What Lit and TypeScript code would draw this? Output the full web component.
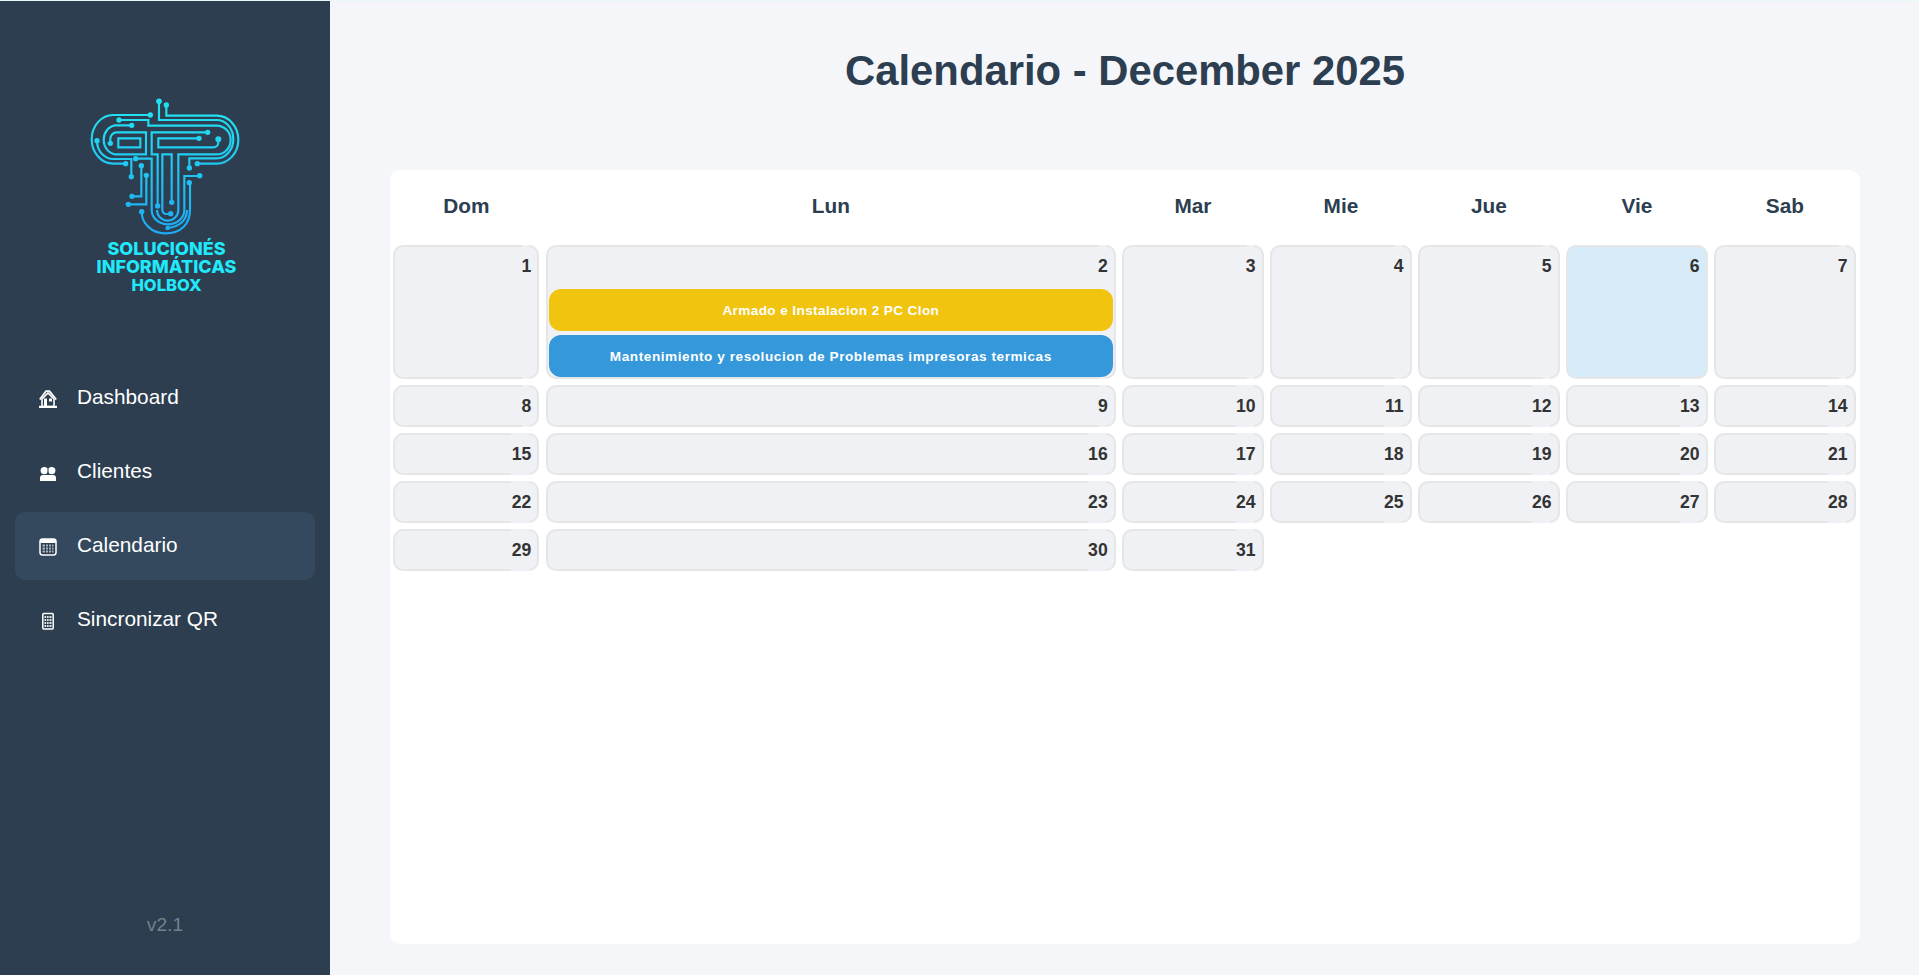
import { LitElement, html, css, svg } from "lit";
import { customElement } from "lit/decorators.js";

const days = ["Dom", "Lun", "Mar", "Mie", "Jue", "Vie", "Sab"];
const nums = Array.from({ length: 31 }, (_, i) => i + 1);

const logoLines = [
  "M244 30V62H395A65 72 0 0 1 395 206H337",
  "M222 19V75H395A50 57.5 0 0 1 395 190H313V219",
  "M102 75H190V92H395A42 43 0 0 1 395 178H280V345A32 32 0 0 1 216 345",
  "M368 112H200V178H218V333",
  "M342 130H220V157H385A15 15 0 0 0 400 142V133",
  "M100 130H166V157H100Z",
  "M196 60H85A65 73 0 0 0 85 206H122",
  "M140 91H90A40 44 0 0 0 90 178H183V112H95A19 19 0 0 0 76 131V145",
  "M36 137C36 170 60 192 85 192H139V245",
  "M169 212V304H141",
  "M184 241V328H130",
  "M152 191H200V345A49 43 0 0 0 298 345V243H344",
  "M170 350C170 385 200 415 240 415C290 415 315 385 315 345V263",
  "M248 399C285 395 306 375 306 345",
  "M260 322V178H232V345A12 12 0 0 0 245 357H257",
];
const logoDots: [number, number, number][] = [
  [222, 19, 8.5], [244, 30, 8], [196, 60, 8], [102, 75, 8], [140, 91, 8], [368, 112, 8], [342, 130, 8],
  [400, 133, 9], [76, 145, 8], [36, 137, 8], [122, 206, 8], [139, 245, 8], [152, 191, 8], [169, 212, 8],
  [184, 241, 8], [141, 304, 8], [130, 328, 8], [218, 333, 8], [260, 322, 8], [257, 356, 8], [170, 350, 8],
  [248, 399, 7], [313, 219, 8], [337, 206, 8], [344, 242, 8], [313, 263, 8],
];

@customElement("app-root")
export class AppRoot extends LitElement {
  static styles = css`
    :host {
      display: flex;
      box-sizing: border-box;
      height: 975px;
      border-top: 1px solid #e6f8f7;
      background: #f4f6fa;
      font-family: "Liberation Sans", Arial, sans-serif;
      overflow: hidden;
    }
    .side {
      width: 330px;
      flex: none;
      background: #2c3e50;
      color: #fff;
      display: flex;
      flex-direction: column;
      align-items: stretch;
      padding: 0 15px;
      box-sizing: border-box;
    }
    .logo {
      display: flex;
      flex-direction: column;
      align-items: center;
      padding-top: 94px;
      height: 363px;
      flex: none;
      box-sizing: border-box;
    }
    .logo svg { display: block; width: 160px; height: 145px; flex: none; }
    .brand {
      font-family: Inter, "Liberation Sans", sans-serif;
      font-weight: 800;
      color: #1fe9fb;
      text-align: center;
      font-size: 18px;
      line-height: 18px;
      padding-left: 3px;
    }
    .brand .sm { font-size: 16.6px; }
    nav { display: flex; flex-direction: column; gap: 6px; }
    .item {
      display: flex;
      align-items: center;
      height: 68px;
      padding-left: 24px;
      gap: 20px;
      border-radius: 10px;
      font-size: 20.8px;
    }
    .item span { position: relative; top: -1px; }
    .item svg { width: 18px; height: 18px; flex: none; margin-top: 2px; }
    .item.active { background: #34495e; }
    .version {
      margin-top: auto;
      padding-bottom: 39px;
      text-align: center;
      font-size: 19.2px;
      color: #75818b;
    }
    main {
      flex: 1;
      min-width: 0;
      display: flex;
      flex-direction: column;
      padding: 0 59px 31px 60px;
    }
    h1 {
      margin: 0;
      height: 169px;
      padding-top: 47px;
      box-sizing: border-box;
      text-align: center;
      font-size: 41.8px;
      line-height: 46px;
      font-weight: 700;
      color: #2c3e50;
    }
    .card {
      flex: 1;
      background: #fff;
      border-radius: 10px;
      padding: 3px 4px 3px 3.4px;
    }
    .grid {
      display: grid;
      grid-template-columns: 146px 569.7px repeat(5, 141.4px);
      column-gap: 6.6px;
      row-gap: 6px;
    }
    .head {
      height: 66px;
      display: flex;
      align-items: center;
      justify-content: center;
      font-size: 20.8px;
      font-weight: 700;
      color: #2c3e50;
    }
    .cell {
      position: relative;
      box-sizing: border-box;
      background: #f0f1f5;
      border: 2px solid #e5e6e8;
      border-radius: 10px;
      min-height: 42px;
    }
    .cell.today { background: #d6eaf8; }
    .num {
      height: 38px;
      padding: 9px 6px 0 0;
      box-sizing: border-box;
      text-align: right;
      font-size: 17.6px;
      line-height: 20px;
      font-weight: 700;
      color: #333;
    }
    .mask {
      position: absolute;
      top: -2px;
      bottom: -2px;
      right: 8px;
      width: 18px;
      box-sizing: border-box;
      border-top: 2px solid #f0f1f5;
      border-bottom: 2px solid #f0f1f5;
    }
    .mask.one { width: 7px; }
    .today .mask { display: none; }
    .events {
      display: flex;
      flex-direction: column;
      gap: 4px;
      padding: 4px 1px 0;
    }
    .event {
      height: 42px;
      border-radius: 12px;
      display: flex;
      align-items: center;
      justify-content: center;
      color: #fff;
      font-size: 13.6px;
      font-weight: 700;
      white-space: nowrap;
    }
    .yellow { background: #f1c40f; letter-spacing: 0.38px; }
    .blue { background: #3498db; letter-spacing: 0.55px; }
  `;

  private icon(name: string) {
    const w = "#fff";
    const bg = "#2c3e50";
    if (name === "home")
      return html`<svg viewBox="0 0 18 18">
        <path d="M0.8 9.5 7 1.2h3.5l6.7 8.3" fill="none" stroke="${w}" stroke-width="1.8"/>
        <path d="M3 9v7.5h12V9L9 3z" fill="${bg}" stroke="${w}" stroke-width="1.6"/>
        <rect x="0" y="15.8" width="18" height="2.2" fill="${w}"/>
        <rect x="5" y="8.5" width="3" height="8" fill="${w}"/>
        <rect x="10" y="8.5" width="3" height="3" fill="${w}"/>
      </svg>`;
    if (name === "users")
      return html`<svg viewBox="0 0 18 18">
        <circle cx="5.3" cy="6.6" r="3.7" fill="${w}"/>
        <circle cx="12.7" cy="6.6" r="3.7" fill="${w}"/>
        <path d="M1 17v-3.5C1 11.5 3 11 5 11h8c2 0 4 .5 4 2.5V17z" fill="${w}"/>
        <path d="M9 5v6" stroke="${bg}" stroke-width="1"/>
      </svg>`;
    if (name === "cal")
      return html`<svg viewBox="0 0 18 18">
        <rect x="1" y="1" width="16" height="16" rx="2.5" fill="${bg}" stroke="${w}" stroke-width="1.5"/>
        <rect x="1" y="1" width="16" height="4" rx="1.5" fill="${w}"/>
        <path d="M3.5 7.5h11M3.5 10.5h11M3.5 13.5h11" stroke="#a9b5c0" stroke-width="2"/>
        <path d="M6.5 6v9M9.5 6v9M12.5 6v9" stroke="${bg}" stroke-width="1"/>
      </svg>`;
    return html`<svg viewBox="0 0 18 18">
        <rect x="3.8" y="1.5" width="10.4" height="15.5" rx="1" fill="${bg}" stroke="${w}" stroke-width="1.5"/>
        <path d="M5.5 5h7M5.5 8h7M5.5 11h7M5.5 14h7" stroke="#dfe4e8" stroke-width="2"/>
        <path d="M7.5 4v11M10 4v11" stroke="${bg}" stroke-width=".8"/>
      </svg>`;
  }

  render() {
    return html`
      <aside class="side">
        <div class="logo">
          <svg viewBox="0 0 480 435">
            <defs>
              <linearGradient id="lg" gradientUnits="userSpaceOnUse" x1="0" y1="60" x2="0" y2="410">
                <stop offset="0" stop-color="#22dff2"/>
                <stop offset="1" stop-color="#1ea9f2"/>
              </linearGradient>
            </defs>
            <g fill="none" stroke="url(#lg)" stroke-width="6.5">
              ${logoLines.map((d) => svg`<path d="${d}"/>`)}
            </g>
            <g fill="url(#lg)">
              ${logoDots.map(([x, y, r]) => svg`<circle cx="${x}" cy="${y}" r="${r}"/>`)}
            </g>
          </svg>
          <div class="brand">SOLUCIONÉS<br />INFORMÁTICAS<br /><span class="sm">HOLBOX</span></div>
        </div>
        <nav>
          <div class="item">${this.icon("home")}<span>Dashboard</span></div>
          <div class="item">${this.icon("users")}<span>Clientes</span></div>
          <div class="item active">${this.icon("cal")}<span>Calendario</span></div>
          <div class="item">${this.icon("phone")}<span>Sincronizar QR</span></div>
        </nav>
        <div class="version">v2.1</div>
      </aside>
      <main>
        <h1>Calendario - December 2025</h1>
        <section class="card">
          <div class="grid">
            ${days.map((d) => html`<div class="head">${d}</div>`)}
            ${nums.map(
              (n) => html`<div class="cell ${n === 6 ? "today" : ""}">
                <div class="mask ${n < 10 ? "one" : ""}"></div>
                <div class="num">${n}</div>
                ${n === 2
                  ? html`<div class="events">
                      <div class="event yellow">Armado e Instalacion 2 PC Clon</div>
                      <div class="event blue">Mantenimiento y resolucion de Problemas impresoras termicas</div>
                    </div>`
                  : ""}
              </div>`
            )}
          </div>
        </section>
      </main>
    `;
  }
}
